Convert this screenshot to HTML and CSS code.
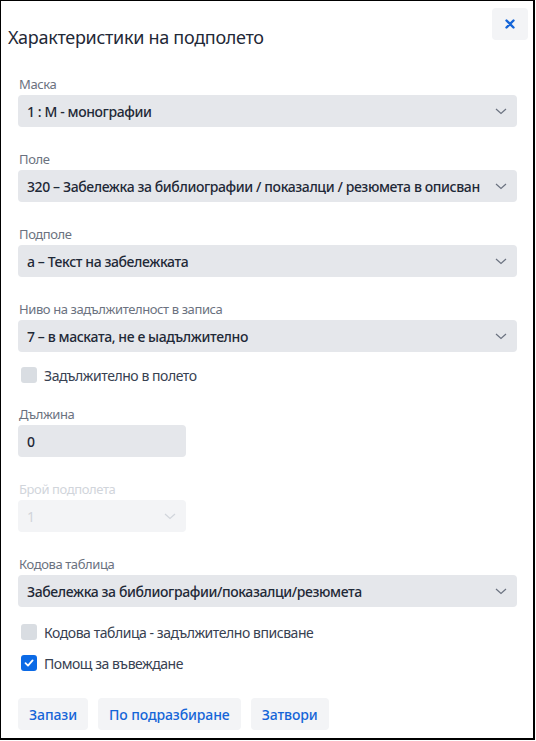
FILE: index.html
```html
<!DOCTYPE html>
<html lang="bg">
<head>
<meta charset="utf-8">
<link rel="stylesheet" href="styles.css">
</head>
<body>
<div class="dialog">
  <div class="header">
    <h1 class="title">Характеристики на подполето</h1>
    <button class="close" aria-label="Затвори">
      <svg width="10" height="10" viewBox="0 0 10 10"><path d="M1.5 1.5 L8.5 8.5 M8.5 1.5 L1.5 8.5" stroke="#1565d8" stroke-width="2.4" stroke-linecap="round"/></svg>
    </button>
  </div>
  <div class="body">
    <div class="field">
      <div class="label">Маска</div>
      <div class="select"><span class="value">1 : M - монографии</span><svg class="chev" width="12" height="7" viewBox="0 0 12 7"><path d="M1 1 L6 5.5 L11 1" fill="none" stroke="#6b7280" stroke-width="1.2"/></svg></div>
    </div>
    <div class="field">
      <div class="label">Поле</div>
      <div class="select"><span class="value">320 – Забележка за библиографии / показалци / резюмета в описван</span><svg class="chev" width="12" height="7" viewBox="0 0 12 7"><path d="M1 1 L6 5.5 L11 1" fill="none" stroke="#6b7280" stroke-width="1.2"/></svg></div>
    </div>
    <div class="field">
      <div class="label">Подполе</div>
      <div class="select"><span class="value">a – Текст на забележката</span><svg class="chev" width="12" height="7" viewBox="0 0 12 7"><path d="M1 1 L6 5.5 L11 1" fill="none" stroke="#6b7280" stroke-width="1.2"/></svg></div>
    </div>
    <div class="field tight">
      <div class="label">Ниво на задължителност в записа</div>
      <div class="select"><span class="value">7 – в маската, не е ыадължително</span><svg class="chev" width="12" height="7" viewBox="0 0 12 7"><path d="M1 1 L6 5.5 L11 1" fill="none" stroke="#6b7280" stroke-width="1.2"/></svg></div>
    </div>
    <div class="check-row first">
      <span class="box"></span><span class="check-label">Задължително в полето</span>
    </div>
    <div class="field after-check">
      <div class="label">Дължина</div>
      <div class="select short"><span class="value">0</span></div>
    </div>
    <div class="field disabled">
      <div class="label">Брой подполета</div>
      <div class="select short"><span class="value">1</span><svg class="chev" width="12" height="7" viewBox="0 0 12 7"><path d="M1 1 L6 5.5 L11 1" fill="none" stroke="#d1d5db" stroke-width="1.2"/></svg></div>
    </div>
    <div class="field tight">
      <div class="label">Кодова таблица</div>
      <div class="select"><span class="value">Забележка за библиографии/показалци/резюмета</span><svg class="chev" width="12" height="7" viewBox="0 0 12 7"><path d="M1 1 L6 5.5 L11 1" fill="none" stroke="#6b7280" stroke-width="1.2"/></svg></div>
    </div>
    <div class="check-row first2">
      <span class="box"></span><span class="check-label">Кодова таблица - задължително вписване</span>
    </div>
    <div class="check-row">
      <span class="box checked"><svg width="12" height="12" viewBox="0 0 12 12"><path d="M2.5 6.2 L5 8.6 L9.6 3.4" fill="none" stroke="#fff" stroke-width="1.8" stroke-linecap="round" stroke-linejoin="round"/></svg></span><span class="check-label">Помощ за въвеждане</span>
    </div>
    <div class="actions">
      <button class="btn">Запази</button>
      <button class="btn">По подразбиране</button>
      <button class="btn">Затвори</button>
    </div>
  </div>
</div>
</body>
</html>
```
FILE: styles.css
```css
* { box-sizing: border-box; }
html, body { margin: 0; padding: 0; background: #fff; }
body { font-family: "Noto Sans", "Open Sans", sans-serif; color: #1f2937; }

.dialog {
  width: 535px;
  height: 740px;
  border: 1px solid #000;
  border-right-width: 2px;
  border-bottom-width: 2px;
  background: #fff;
  overflow: hidden;
}

.header {
  display: flex;
  justify-content: space-between;
  align-items: flex-start;
  padding: 7px 5px 0 7px;
}
.title {
  margin: 17px 0 0 0;
  font-size: 18px;
  font-weight: 400;
  line-height: 24px;
  color: #1f2937;
  letter-spacing: -0.3px;
}
.close {
  width: 36px;
  height: 32px;
  border: 0;
  border-radius: 4px;
  background: #f3f4f6;
  display: flex;
  align-items: center;
  justify-content: center;
  padding: 0;
}

.body {
  padding: 26px 16px 0 17px;
}

.field { margin-bottom: 23px; }
.field.tight { margin-bottom: 0; }
.label {
  font-size: 13px;
  line-height: 18px;
  color: #6b7280;
  padding-left: 1px;
  margin-bottom: 2px;
  letter-spacing: -0.4px;
}
.select {
  height: 32px;
  border-radius: 4px;
  background: #e5e7eb;
  display: flex;
  align-items: center;
  padding: 0 10px 0 9px;
  gap: 8px;
}
.select.short { width: 168px; }
.value {
  flex: 1;
  min-width: 0;
  white-space: nowrap;
  overflow: hidden;
  font-size: 14px;
  font-weight: 500;
  color: #1f2937;
  letter-spacing: -0.4px;
}
.chev { flex: none; }

.field.disabled .label { color: #d1d5db; }
.field.disabled .select { background: #f3f4f6; }
.field.disabled .value { color: #d1d5db; font-weight: 400; }

.check-row {
  display: flex;
  align-items: center;
  gap: 7px;
  padding-left: 3px;
  height: 20px;
  margin-bottom: 11px;
}
.check-row.first { margin-top: 13px; }
.check-row.first2 { margin-top: 15px; }
.box {
  width: 16px;
  height: 16px;
  border-radius: 3px;
  background: #d9dde2;
  display: flex;
  align-items: center;
  justify-content: center;
}
.box.checked { background: #0b6ae6; }
.check-label {
  font-size: 14px;
  color: #374151;
  letter-spacing: -0.45px;
}
.field.after-check { margin-top: 20px; }

.actions {
  display: flex;
  gap: 10px;
  margin-top: 25px;
}
.btn {
  height: 32px;
  border: 0;
  border-radius: 4px;
  background: #f3f4f6;
  padding: 0 11px;
  font-family: inherit;
  font-size: 14px;
  font-weight: 500;
  color: #1565d8;
  letter-spacing: -0.1px;
}
```
